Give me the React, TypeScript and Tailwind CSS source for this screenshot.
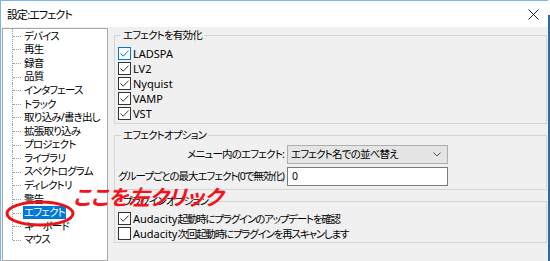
import React from "react";

const treeItems = [
  "デバイス",
  "再生",
  "録音",
  "品質",
  "インタフェース",
  "トラック",
  "取り込み/書き出し",
  "拡張取り込み",
  "プロジェクト",
  "ライブラリ",
  "スペクトログラム",
  "ディレクトリ",
  "警告",
  "エフェクト",
  "キーボード",
  "マウス",
];

function CheckBox({ checked, focus }: { checked?: boolean; focus?: boolean }) {
  const color = focus ? "#0078d7" : "#333333";
  return (
    <span
      className={`flex h-[13px] w-[13px] shrink-0 items-center justify-center border bg-white ${
        focus ? "border-[#0078d7]" : "border-[#333333]"
      }`}
    >
      {checked && (
        <svg width="11" height="11" viewBox="0 0 11 11">
          <path d="M1.5 5.5 L4.2 8.2 L9.6 2.6" fill="none" stroke={color} strokeWidth="1" />
        </svg>
      )}
    </span>
  );
}

function CheckRow({ children, checked, focus }: { children: React.ReactNode; checked?: boolean; focus?: boolean }) {
  return (
    <div className="flex h-[15px] items-center gap-[2px] pl-[3px]">
      <CheckBox checked={checked} focus={focus} />
      <span className="whitespace-nowrap leading-none">{children}</span>
    </div>
  );
}

function Latin({ children }: { children: React.ReactNode }) {
  return <span className="text-[11px] tracking-normal">{children}</span>;
}

function TreeRow({ label, index, last }: { label: string; index: number; last: boolean }) {
  const selected = label === "エフェクト";
  return (
    <div className="flex h-[13.6px] items-center">
      <div className="relative ml-[9px] w-[11px] self-stretch">
        <div
          className={`absolute left-0 border-l border-dotted border-[#a0a0a0] ${
            last ? "h-1/2" : "h-full"
          } ${index === 0 ? "-top-[1px]" : "top-0"}`}
        />
        <div className="absolute left-[1px] top-1/2 w-[8px] border-t border-dotted border-[#a0a0a0]" />
      </div>
      <span
        className={`flex h-full items-center whitespace-nowrap px-[1px] leading-none ${
          selected ? "bg-[#0078d7] text-white" : "text-black"
        }`}
      >
        {label}
      </span>
    </div>
  );
}

export default function App() {
  return (
    <div className="flex h-[261px] w-[550px] overflow-hidden bg-white font-['Noto_Sans','Noto_Sans_CJK_JP',sans-serif] text-[10.5px] tracking-[-0.8px] text-black [font-feature-settings:'palt']">
      <div className="relative flex h-full w-[548px] flex-col border-l border-t border-[#7db6e8]">
        {/* title bar */}
        <div className="flex h-[26px] shrink-0 items-center justify-between bg-white pl-[6px] pr-[9px]">
          <span className="text-[11px] leading-none tracking-[-0.9px]">設定:エフェクト</span>
          <svg width="11" height="11" viewBox="0 0 11 11">
            <path d="M0.5 0.5 L10.5 10.5 M10.5 0.5 L0.5 10.5" stroke="#222" strokeWidth="1" />
          </svg>
        </div>

        {/* body */}
        <div className="flex flex-1 bg-[#f0f0f0] pl-[1px] pt-[1px]">
          {/* tree */}
          <div className="h-full w-[106px] shrink-0 border border-[#a8a8a8] bg-white">
            {treeItems.map((t, i) => (
              <TreeRow key={t} label={t} index={i} last={i === treeItems.length - 1} />
            ))}
          </div>

          {/* settings */}
          <div className="ml-[6px] flex flex-1 flex-col pr-[1px]">
            <fieldset className="border border-[#d5d5d5] px-0 pb-[2px]">
              <legend className="ml-[6px] px-[2px] leading-[14px]">エフェクトを有効化</legend>
              <div className="pt-[4px]">
                <CheckRow checked focus><Latin>LADSPA</Latin></CheckRow>
                <CheckRow checked><Latin>LV2</Latin></CheckRow>
                <CheckRow checked><Latin>Nyquist</Latin></CheckRow>
                <CheckRow checked><Latin>VAMP</Latin></CheckRow>
                <CheckRow checked><Latin>VST</Latin></CheckRow>
              </div>
            </fieldset>

            <fieldset className="mt-[4px] border border-[#d5d5d5] pb-[3px]">
              <legend className="ml-[6px] px-[2px] leading-[14px]">エフェクトオプション</legend>
              <div className="grid grid-cols-[166px_161px] gap-x-[3px] gap-y-[3px] pl-[3px] pt-[3px]">
                <span className="self-center whitespace-nowrap text-right leading-none">メニュー内のエフェクト:</span>
                <div className="flex h-[19px] items-center justify-between border border-[#adadad] bg-[#e5e5e5] pl-[3px] pr-[6px]">
                  <span className="leading-none">エフェクト名での並べ替え</span>
                  <svg width="8" height="5" viewBox="0 0 8 5">
                    <path d="M0.5 0.5 L4 4 L7.5 0.5" fill="none" stroke="#555" strokeWidth="1" />
                  </svg>
                </div>
                <span className="self-center whitespace-nowrap text-right leading-none tracking-[-1px]">
                  グループごとの最大エフェクト(0で無効化)
                </span>
                <div className="flex h-[19px] items-center border border-[#7a7a7a] bg-white pl-[4px]">
                  <span className="leading-none">0</span>
                </div>
              </div>
            </fieldset>

            <fieldset className="mt-[4px] border border-[#d5d5d5] pb-[1px]">
              <legend className="ml-[6px] px-[2px] leading-[14px]">プラグインオプション</legend>
              <div className="pt-[3px] tracking-[-1.2px]">
                <CheckRow checked><Latin>Audacity</Latin>起動時にプラグインのアップデートを確認</CheckRow>
                <CheckRow><Latin>Audacity</Latin>次回起動時にプラグインを再スキャンします</CheckRow>
              </div>
            </fieldset>
          </div>
        </div>

        {/* red annotation */}
        <svg className="pointer-events-none absolute left-[3px] top-[198px]" width="72" height="30" viewBox="0 0 72 30">
          <ellipse cx="36" cy="14.5" rx="33" ry="11.5" fill="none" stroke="#e8141c" strokeWidth="3" />
        </svg>
        <span className="pointer-events-none absolute left-[72px] top-[186px] text-[21px] font-bold italic leading-none tracking-normal text-[#f5121c]">
          ここを左クリック
        </span>
      </div>
      <div className="flex h-full w-[2px] flex-col">
        <div className="h-[15px] bg-white" />
        <div className="flex-1 bg-[#2d6aa6]" />
      </div>
    </div>
  );
}
